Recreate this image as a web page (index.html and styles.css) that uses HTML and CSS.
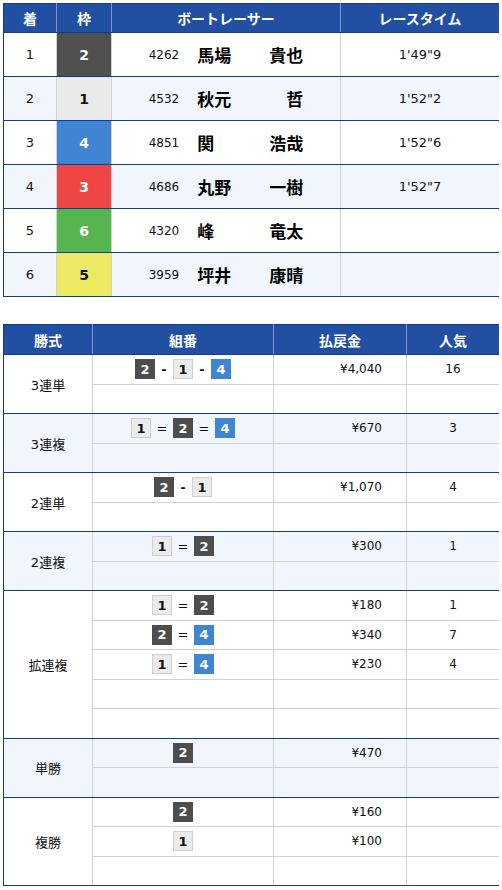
FILE: index.html
```html
<!DOCTYPE html>
<html lang="ja">
<head>
    <meta charset="UTF-8">
    <meta name="viewport" content="width=device-width, initial-scale=1.0">
    <title>レース結果</title>
    <link rel="stylesheet" href="styles.css">
</head>
<body>
    <table class="result">
        <colgroup>
            <col class="c-rank"><col class="c-frame"><col class="c-racer"><col class="c-time">
        </colgroup>
        <thead>
            <tr><th>着</th><th>枠</th><th>ボートレーサー</th><th>レースタイム</th></tr>
        </thead>
        <tbody>
            <tr>
                <td>1</td><td class="frame f2">2</td>
                <td><div class="racer"><span class="toban">4262</span><span class="name"><span>馬場</span><span>貴也</span></span></div></td>
                <td>1'49"9</td>
            </tr>
            <tr class="alt">
                <td>2</td><td class="frame f1">1</td>
                <td><div class="racer"><span class="toban">4532</span><span class="name"><span>秋元</span><span>哲</span></span></div></td>
                <td>1'52"2</td>
            </tr>
            <tr>
                <td>3</td><td class="frame f4">4</td>
                <td><div class="racer"><span class="toban">4851</span><span class="name"><span>関</span><span>浩哉</span></span></div></td>
                <td>1'52"6</td>
            </tr>
            <tr class="alt">
                <td>4</td><td class="frame f3">3</td>
                <td><div class="racer"><span class="toban">4686</span><span class="name"><span>丸野</span><span>一樹</span></span></div></td>
                <td>1'52"7</td>
            </tr>
            <tr>
                <td>5</td><td class="frame f6">6</td>
                <td><div class="racer"><span class="toban">4320</span><span class="name"><span>峰</span><span>竜太</span></span></div></td>
                <td></td>
            </tr>
            <tr class="alt">
                <td>6</td><td class="frame f5">5</td>
                <td><div class="racer"><span class="toban">3959</span><span class="name"><span>坪井</span><span>康晴</span></span></div></td>
                <td></td>
            </tr>
        </tbody>
    </table>

    <table class="payout">
        <colgroup>
            <col class="c-kind"><col class="c-combo"><col class="c-yen"><col class="c-pop">
        </colgroup>
        <thead>
            <tr><th>勝式</th><th>組番</th><th>払戻金</th><th>人気</th></tr>
        </thead>
        <tbody>
            <tr class="grp">
                <td class="kind" rowspan="2">3連単</td>
                <td><div class="combo"><span class="num n2">2</span><span class="sep">-</span><span class="num n1">1</span><span class="sep">-</span><span class="num n4">4</span></div></td>
                <td class="yen">¥4,040</td><td class="pop">16</td>
            </tr>
            <tr><td></td><td></td><td></td></tr>
        </tbody>
        <tbody class="alt">
            <tr class="grp">
                <td class="kind" rowspan="2">3連複</td>
                <td><div class="combo"><span class="num n1">1</span><span class="sep eq">=</span><span class="num n2">2</span><span class="sep eq">=</span><span class="num n4">4</span></div></td>
                <td class="yen">¥670</td><td class="pop">3</td>
            </tr>
            <tr><td></td><td></td><td></td></tr>
        </tbody>
        <tbody>
            <tr class="grp">
                <td class="kind" rowspan="2">2連単</td>
                <td><div class="combo"><span class="num n2">2</span><span class="sep">-</span><span class="num n1">1</span></div></td>
                <td class="yen">¥1,070</td><td class="pop">4</td>
            </tr>
            <tr><td></td><td></td><td></td></tr>
        </tbody>
        <tbody class="alt">
            <tr class="grp">
                <td class="kind" rowspan="2">2連複</td>
                <td><div class="combo"><span class="num n1">1</span><span class="sep eq">=</span><span class="num n2">2</span></div></td>
                <td class="yen">¥300</td><td class="pop">1</td>
            </tr>
            <tr><td></td><td></td><td></td></tr>
        </tbody>
        <tbody>
            <tr class="grp">
                <td class="kind" rowspan="5">拡連複</td>
                <td><div class="combo"><span class="num n1">1</span><span class="sep eq">=</span><span class="num n2">2</span></div></td>
                <td class="yen">¥180</td><td class="pop">1</td>
            </tr>
            <tr>
                <td><div class="combo"><span class="num n2">2</span><span class="sep eq">=</span><span class="num n4">4</span></div></td>
                <td class="yen">¥340</td><td class="pop">7</td>
            </tr>
            <tr>
                <td><div class="combo"><span class="num n1">1</span><span class="sep eq">=</span><span class="num n4">4</span></div></td>
                <td class="yen">¥230</td><td class="pop">4</td>
            </tr>
            <tr><td></td><td></td><td></td></tr>
            <tr><td></td><td></td><td></td></tr>
        </tbody>
        <tbody class="alt">
            <tr class="grp">
                <td class="kind" rowspan="2">単勝</td>
                <td><div class="combo"><span class="num n2">2</span></div></td>
                <td class="yen">¥470</td><td class="pop"></td>
            </tr>
            <tr><td></td><td></td><td></td></tr>
        </tbody>
        <tbody>
            <tr class="grp">
                <td class="kind" rowspan="3">複勝</td>
                <td><div class="combo"><span class="num n2">2</span></div></td>
                <td class="yen">¥160</td><td class="pop"></td>
            </tr>
            <tr>
                <td><div class="combo"><span class="num n1">1</span></div></td>
                <td class="yen">¥100</td><td class="pop"></td>
            </tr>
            <tr><td></td><td></td><td></td></tr>
        </tbody>
    </table>
</body>
</html>
```

FILE: styles.css
```css
:root {
    --navy: #0f3f8c;
    --grid: #d2d2d2;
    --alt-bg: #f1f6fd;
}
body {
    margin: 3px 3px 0 3px;
    font-family: "DejaVu Sans", "Noto Sans CJK JP", sans-serif;
    font-size: 12px;
    color: #111;
    background: #fff;
}
table {
    width: 496px;
    border-collapse: collapse;
    table-layout: fixed;
    border: 1px solid var(--navy);
}
th {
    height: 29px;
    padding: 0;
    color: #fff;
    font-family: "Noto Sans CJK JP", sans-serif;
    font-size: 14px;
    font-weight: bold;
    background: repeating-conic-gradient(#17469a 0 25%, #2b5bab 0 50%) 0 0 / 2px 2px;
    border-left: 1px solid #7c98c8;
    border-bottom: 1px solid var(--navy);
}
th:first-child {
    border-left: none;
}
td {
    padding: 0;
    text-align: center;
    border-left: 1px solid var(--grid);
}

/* 着順表 */
.c-rank { width: 53px; }
.c-frame { width: 55px; }
.c-racer { width: 229px; }
.c-time { width: 159px; }
.result th {
    height: 28px;
}
.result td {
    height: 43px;
    border-bottom: 1px solid var(--navy);
    font-size: 13px;
}
.result td:first-child {
    border-left: none;
}
.result tr.alt td {
    background: var(--alt-bg);
}
.result td.frame {
    font-size: 14px;
    font-weight: bold;
}
.f1 { background: #eaeaea !important; color: #111; }
.f2 { background: #505050 !important; color: #fff; }
.f3 { background: #ef4545 !important; color: #fff; }
.f4 { background: #3f85d4 !important; color: #fff; }
.f5 { background: #ece963 !important; color: #111; }
.f6 { background: #56b54f !important; color: #fff; }
.racer {
    display: flex;
    align-items: center;
    justify-content: center;
    gap: 18px;
}
.toban {
    font-size: 12px;
}
.name {
    width: 106px;
    display: flex;
    justify-content: space-between;
    font-family: "Noto Sans CJK JP", sans-serif;
    font-size: 17px;
    font-weight: bold;
    color: #000;
}

/* 払戻金表 */
.payout {
    margin-top: 27px;
}
.c-kind { width: 89px; }
.c-combo { width: 181px; }
.c-yen { width: 133px; }
.c-pop { width: 93px; }
.payout td {
    height: 28.5px;
    border-bottom: 1px solid var(--grid);
    font-size: 12px;
}
.payout tbody {
    border-bottom: 1px solid var(--navy);
}
.payout tbody tr:last-child td,
.payout td.kind {
    border-bottom: 1px solid var(--navy);
}
.payout td.kind {
    border-left: none;
    font-size: 13px;
}
.payout tbody.alt td {
    background: var(--alt-bg);
}
.payout td.yen {
    text-align: right;
    padding-right: 24px;
}
.combo {
    display: flex;
    align-items: center;
    justify-content: center;
}
.num {
    width: 20px;
    height: 20px;
    box-sizing: border-box;
    display: flex;
    align-items: center;
    justify-content: center;
    font-size: 13px;
    font-weight: bold;
    color: #fff;
}
.n1 { background: #ebebeb; border: 1px solid #cfcfcf; color: #111; }
.n2 { background: #4d4d4d; }
.n4 { background: #3f85d4; }
.sep {
    width: 18px;
    text-align: center;
    font-weight: bold;
    font-size: 13px;
}
.sep.eq {
    width: 22px;
    font-weight: normal;
}
```
